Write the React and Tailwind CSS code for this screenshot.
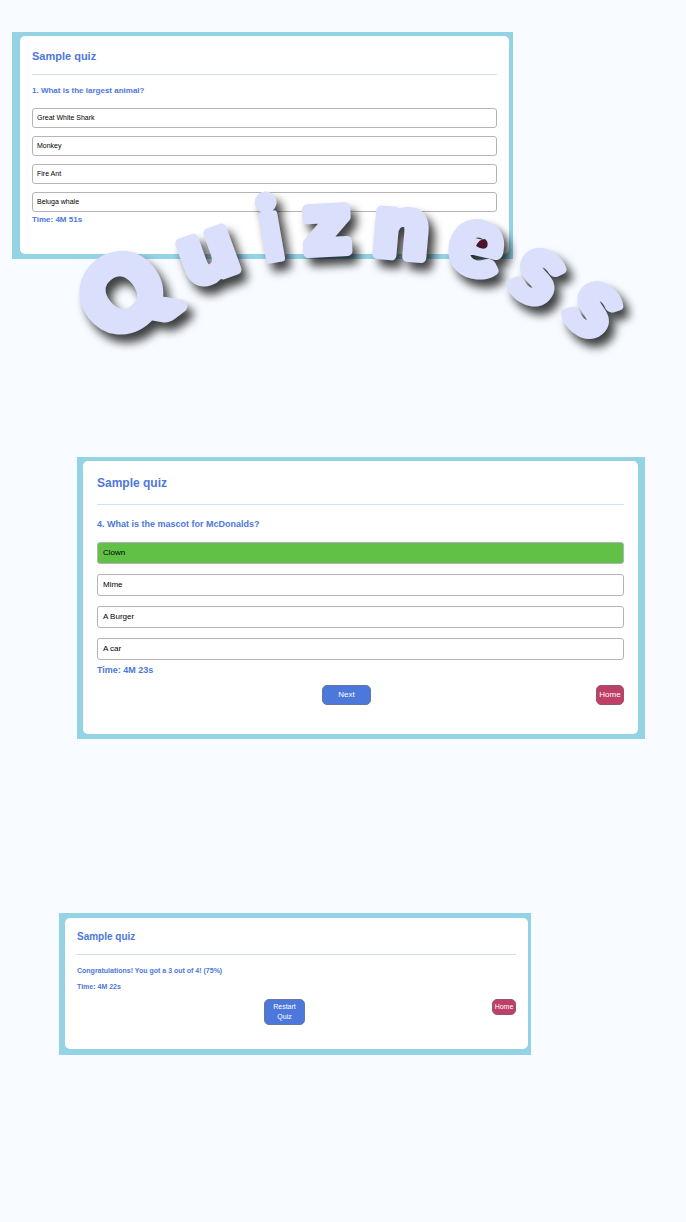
import React from "react";

const wide = "stroke-[10px] font-['DejaVu_Sans',sans-serif] font-bold";
const round = "stroke-[9px] font-['Lato',sans-serif] font-black";
const heavy = "stroke-[13px] font-['Lato',sans-serif] font-black";
const dotted = "stroke-[7px] font-['Lato',sans-serif] font-black";

const letters = [
  { char: "Q", x: 143, y: 319, angle: -38, width: 0.83, size: 94, face: heavy },
  { char: "u", x: 216, y: 277, angle: -20, width: 0.712, size: 80, face: wide },
  { char: "i", x: 276, y: 259, angle: -10, width: 0.27, size: 87, face: dotted },
  { char: "z", x: 328, y: 252, angle: -3, width: 0.582, size: 80, face: wide },
  { char: "n", x: 399, y: 256, angle: 5, width: 0.712, size: 80, face: wide },
  { char: "e", x: 470, y: 273, angle: 13, width: 0.53, size: 96, face: round },
  { char: "s", x: 525, y: 299, angle: 30, width: 0.455, size: 96, face: round },
  { char: "s", x: 578, y: 330, angle: 38, width: 0.455, size: 96, face: round },
];

function Wordmark() {
  return (
    <svg
      className="pointer-events-none absolute left-0 top-0"
      width="686"
      height="400"
      viewBox="0 0 686 400"
      role="img"
      aria-label="Quizness"
    >
      <g className="drop-shadow-[6px_8px_5px_rgba(0,0,0,0.75)]">
        <text className="fill-[#dae0fc] stroke-[#dae0fc]" strokeLinejoin="round">
          {letters.map((l, i) => {
            const rad = (l.angle * Math.PI) / 180;
            const half = (l.width * l.size) / 2;
            return (
              <tspan
                key={i}
                className={l.face}
                x={l.x - half * Math.cos(rad)}
                y={l.y - half * Math.sin(rad)}
                rotate={l.angle}
                fontSize={l.size}
              >
                {l.char}
              </tspan>
            );
          })}
        </text>
      </g>
      <path d="M476 246 Q479 239 485 239 Q489 242 487 247 Q484 251 476 246Z" fill="#4b1428" />
    </svg>
  );
}

function Answers({ items, className, itemClass }) {
  return (
    <div className={`flex flex-col ${className}`}>
      {items.map((a) => (
        <button
          key={a.label}
          type="button"
          className={`flex items-center rounded-[3px] border border-[#b4b4b4] text-left text-black ${itemClass} ${
            a.correct ? "bg-[#61c146]" : "bg-white"
          }`}
        >
          {a.label}
        </button>
      ))}
    </div>
  );
}

function Actions({ label, className, mainClass, homeClass }) {
  return (
    <div className={`flex items-start justify-between text-white ${className}`}>
      <span />
      <button type="button" className={`rounded-[5px] border border-[#65779f] bg-[#4d78db] text-center ${mainClass}`}>
        {label}
      </button>
      <button type="button" className={`rounded-[5px] border border-[#93576c] bg-[#be4068] text-center ${homeClass}`}>
        Home
      </button>
    </div>
  );
}

export default function App() {
  return (
    <main className="relative min-h-screen overflow-x-hidden bg-[#f8fbff] pt-8 font-['Liberation_Sans',Arial,sans-serif] text-[#4d77db]">
      <section className="ml-3 max-w-[501px] bg-[#94d2e6] pt-1 pr-1 pb-[5px] pl-2">
        <div className="rounded-[5px] bg-white px-3 pt-3 pb-7">
          <h2 className="text-[11px] leading-4 font-bold">Sample quiz</h2>
          <hr className="mt-[10px] border-[#cfdff6]" />
          <h3 className="mt-[10px] text-[8px] leading-3 font-bold">1. What is the largest animal?</h3>
          <Answers
            className="mt-[11px] gap-2"
            itemClass="h-5 px-1 text-[7px]"
            items={[
              { label: "Great White Shark" },
              { label: "Monkey" },
              { label: "Fire Ant" },
              { label: "Beluga whale" },
            ]}
          />
          <p className="mt-[2px] text-[8px] leading-3 font-bold">Time: 4M 51s</p>
        </div>
      </section>

      <section className="mt-[198px] ml-[77px] max-w-[568px] bg-[#94d2e6] pt-1 pr-[7px] pb-[5px] pl-[6px]">
        <div className="rounded-[5px] bg-white px-[14px] pt-[14px] pb-[29px]">
          <h2 className="text-[12px] leading-4 font-bold">Sample quiz</h2>
          <hr className="mt-[13px] border-[#cfdff6]" />
          <h3 className="mt-[13px] text-[9px] leading-3 font-bold">4. What is the mascot for McDonalds?</h3>
          <Answers
            className="mt-3 gap-[10px]"
            itemClass="h-[22px] px-[5px] text-[8px]"
            items={[
              { label: "Clown", correct: true },
              { label: "Mime" },
              { label: "A Burger" },
              { label: "A car" },
            ]}
          />
          <p className="mt-1 text-[9px] leading-3 font-bold">Time: 4M 23s</p>
          <Actions
            label="Next"
            className="mt-[9px] text-[8px] leading-[18px]"
            mainClass="h-5 w-[49px]"
            homeClass="h-5 w-7"
          />
        </div>
      </section>

      <section className="mt-[174px] ml-[59px] max-w-[472px] bg-[#94d2e6] pt-[5px] pr-[3px] pb-[6px] pl-[6px]">
        <div className="rounded-[5px] bg-white px-3 pt-[11px] pb-6">
          <h2 className="text-[10px] leading-4 font-bold">Sample quiz</h2>
          <hr className="mt-[9px] border-[#cfdbf6]" />
          <h3 className="mt-[10px] text-[7px] leading-3 font-bold">Congratulations! You got a 3 out of 4! (75%)</h3>
          <p className="mt-1 text-[7px] leading-3 font-bold">Time: 4M 22s</p>
          <Actions
            label="Restart Quiz"
            className="mt-[6px] text-[7px]"
            mainClass="h-[26px] w-[41px] px-1 leading-[10px]"
            homeClass="h-4 w-6 leading-[14px]"
          />
        </div>
      </section>

      <Wordmark />
    </main>
  );
}
